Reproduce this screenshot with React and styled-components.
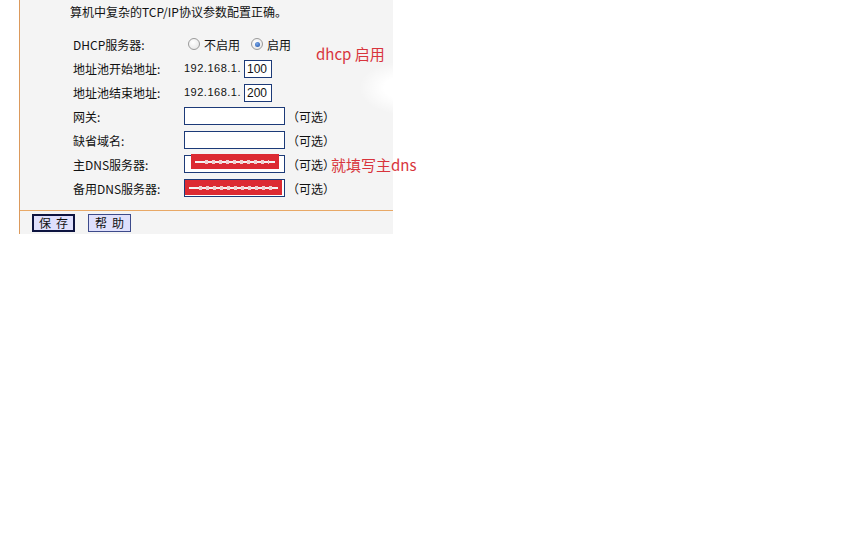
import React from 'react';
import styled, { createGlobalStyle } from 'styled-components';

const Global = createGlobalStyle`
  html, body {
    margin: 0;
    padding: 0;
    background: #fff;
  }
  body {
    width: 864px;
    height: 540px;
    overflow: hidden;
    font-family: "Noto Sans CJK SC", sans-serif;
  }
`;

const Page = styled.div`
  padding-left: 19px;
`;

const Panel = styled.div`
  position: relative;
  width: 373px;
  background: #f4f4f4;
  border-left: 1px solid #dc9a5c;
  color: #111;
  font-size: 12px;
`;

const Intro = styled.div`
  padding: 3px 0 0 50px;
  height: 21px;
  line-height: 18px;
  font-size: 12px;
`;

const Form = styled.div`
  display: grid;
  grid-template-columns: 111px 1fr;
  grid-auto-rows: 24px;
  padding: 8px 0 10px 53px;
`;

const Label = styled.div`
  display: flex;
  align-items: center;
  padding-top: ${p => (p.$first ? '0' : '1px')};
  font-size: 12px;
  white-space: nowrap;
`;

const Value = styled.div`
  display: flex;
  align-items: center;
  gap: 4px;
  white-space: nowrap;
  & > * {
    flex-shrink: 0;
  }
`;

const Radio = styled.span`
  width: 10px;
  height: 10px;
  border-radius: 50%;
  border: 1px solid #9a9a9a;
  background: radial-gradient(circle at 40% 35%, #ffffff 0%, #e2e2e2 100%);
  display: inline-flex;
  align-items: center;
  justify-content: center;
  margin-left: ${p => p.$gap || 0}px;
  &::after {
    content: '';
    display: ${p => (p.$checked ? 'block' : 'none')};
    width: 5px;
    height: 5px;
    border-radius: 50%;
    background: radial-gradient(circle at 40% 35%, #7aa8e8 0%, #1b4fa8 100%);
  }
`;

const Prefix = styled.span`
  font-family: "Liberation Sans", Arial, sans-serif;
  font-size: 11px;
  letter-spacing: 0.5px;
  margin-right: -1px;
`;

const Box = styled.div`
  box-sizing: border-box;
  width: ${p => p.$w}px;
  height: 18px;
  border: 1px solid #1c3a78;
  background: #fff;
  font-family: "Liberation Sans", Arial, sans-serif;
  font-size: 12px;
  line-height: 16px;
  padding-left: 2px;
  position: relative;
  margin-top: ${p => p.$mt || 0}px;
`;

const Redact = styled.div`
  position: absolute;
  top: ${p => p.$top}px;
  left: ${p => p.$left}px;
  right: ${p => p.$right}px;
  bottom: ${p => p.$bottom}px;
  background: #dc2a32;
  &::before {
    content: '';
    position: absolute;
    left: 4px;
    right: 4px;
    top: 50%;
    height: 2px;
    margin-top: -1px;
    background: #f4f4f4;
  }
  &::after {
    content: '';
    position: absolute;
    left: 14px;
    right: 10px;
    top: 50%;
    height: 4px;
    margin-top: -2px;
    background: repeating-linear-gradient(90deg, #f0d0d0 0 3px, transparent 3px 7px);
  }
`;

const Optional = styled.span`
  font-size: 12px;
  margin-left: -2px;
`;

const Note = styled.span`
  color: #d8343c;
  font-size: 15px;
  white-space: nowrap;
  margin-left: ${p => p.$ml}px;
  position: relative;
  top: ${p => p.$top || 0}px;
`;

const Divider = styled.div`
  height: 1px;
  background: #e8a866;
`;

const Buttons = styled.div`
  display: flex;
  gap: 13px;
  padding: 3px 0 3px 12px;
  height: 17px;
`;

const Button = styled.button`
  box-sizing: border-box;
  width: 43px;
  height: 18px;
  padding: 0;
  background: #dfe0fc;
  border: ${p => (p.$primary ? '2px solid #0d1440' : '1px solid #3c4a8a')};
  font-family: "Noto Sans CJK SC", sans-serif;
  font-size: 12px;
  line-height: 14px;
  letter-spacing: 5px;
  text-indent: 5px;
  color: #111;
`;

const Smudge = styled.div`
  position: absolute;
  left: 340px;
  top: 62px;
  width: 60px;
  height: 52px;
  background: radial-gradient(ellipse at 70% 50%, rgba(255,255,255,1) 30%, rgba(255,255,255,0) 72%);
  pointer-events: none;
`;

const rows = [
  { label: '地址池开始地址:', ip: '100' },
  { label: '地址池结束地址:', ip: '200' },
];

export default function App() {
  return (
    <>
      <Global />
      <Page>
        <Panel>
          <Intro>算机中复杂的TCP/IP协议参数配置正确。</Intro>
          <Form>
            <Label $first>DHCP服务器:</Label>
            <Value>
              <Radio $gap={4} />
              <span>不启用</span>
              <Radio $gap={7} $checked />
              <span>启用</span>
              <Note $ml={21} $top={9}>dhcp 启用</Note>
            </Value>

            {rows.map(r => (
              <React.Fragment key={r.label}>
                <Label>{r.label}</Label>
                <Value>
                  <Prefix>192.168.1.</Prefix>
                  <Box $w={28} $mt={2}>{r.ip}</Box>
                </Value>
              </React.Fragment>
            ))}

            <Label>网关:</Label>
            <Value>
              <Box $w={101} />
              <Optional>（可选）</Optional>
            </Value>

            <Label>缺省域名:</Label>
            <Value>
              <Box $w={101} />
              <Optional>（可选）</Optional>
            </Value>

            <Label>主DNS服务器:</Label>
            <Value>
              <Box $w={101}>
                <Redact $top={-2} $left={6} $right={5} $bottom={3} />
              </Box>
              <Optional>（可选）</Optional>
              <Note $ml={-8}>就填写主dns</Note>
            </Value>

            <Label>备用DNS服务器:</Label>
            <Value>
              <Box $w={101}>
                <Redact $top={0} $left={0} $right={2} $bottom={1} />
              </Box>
              <Optional>（可选）</Optional>
            </Value>
          </Form>
          <Divider />
          <Buttons>
            <Button $primary>保存</Button>
            <Button>帮助</Button>
          </Buttons>
          <Smudge />
        </Panel>
      </Page>
    </>
  );
}
